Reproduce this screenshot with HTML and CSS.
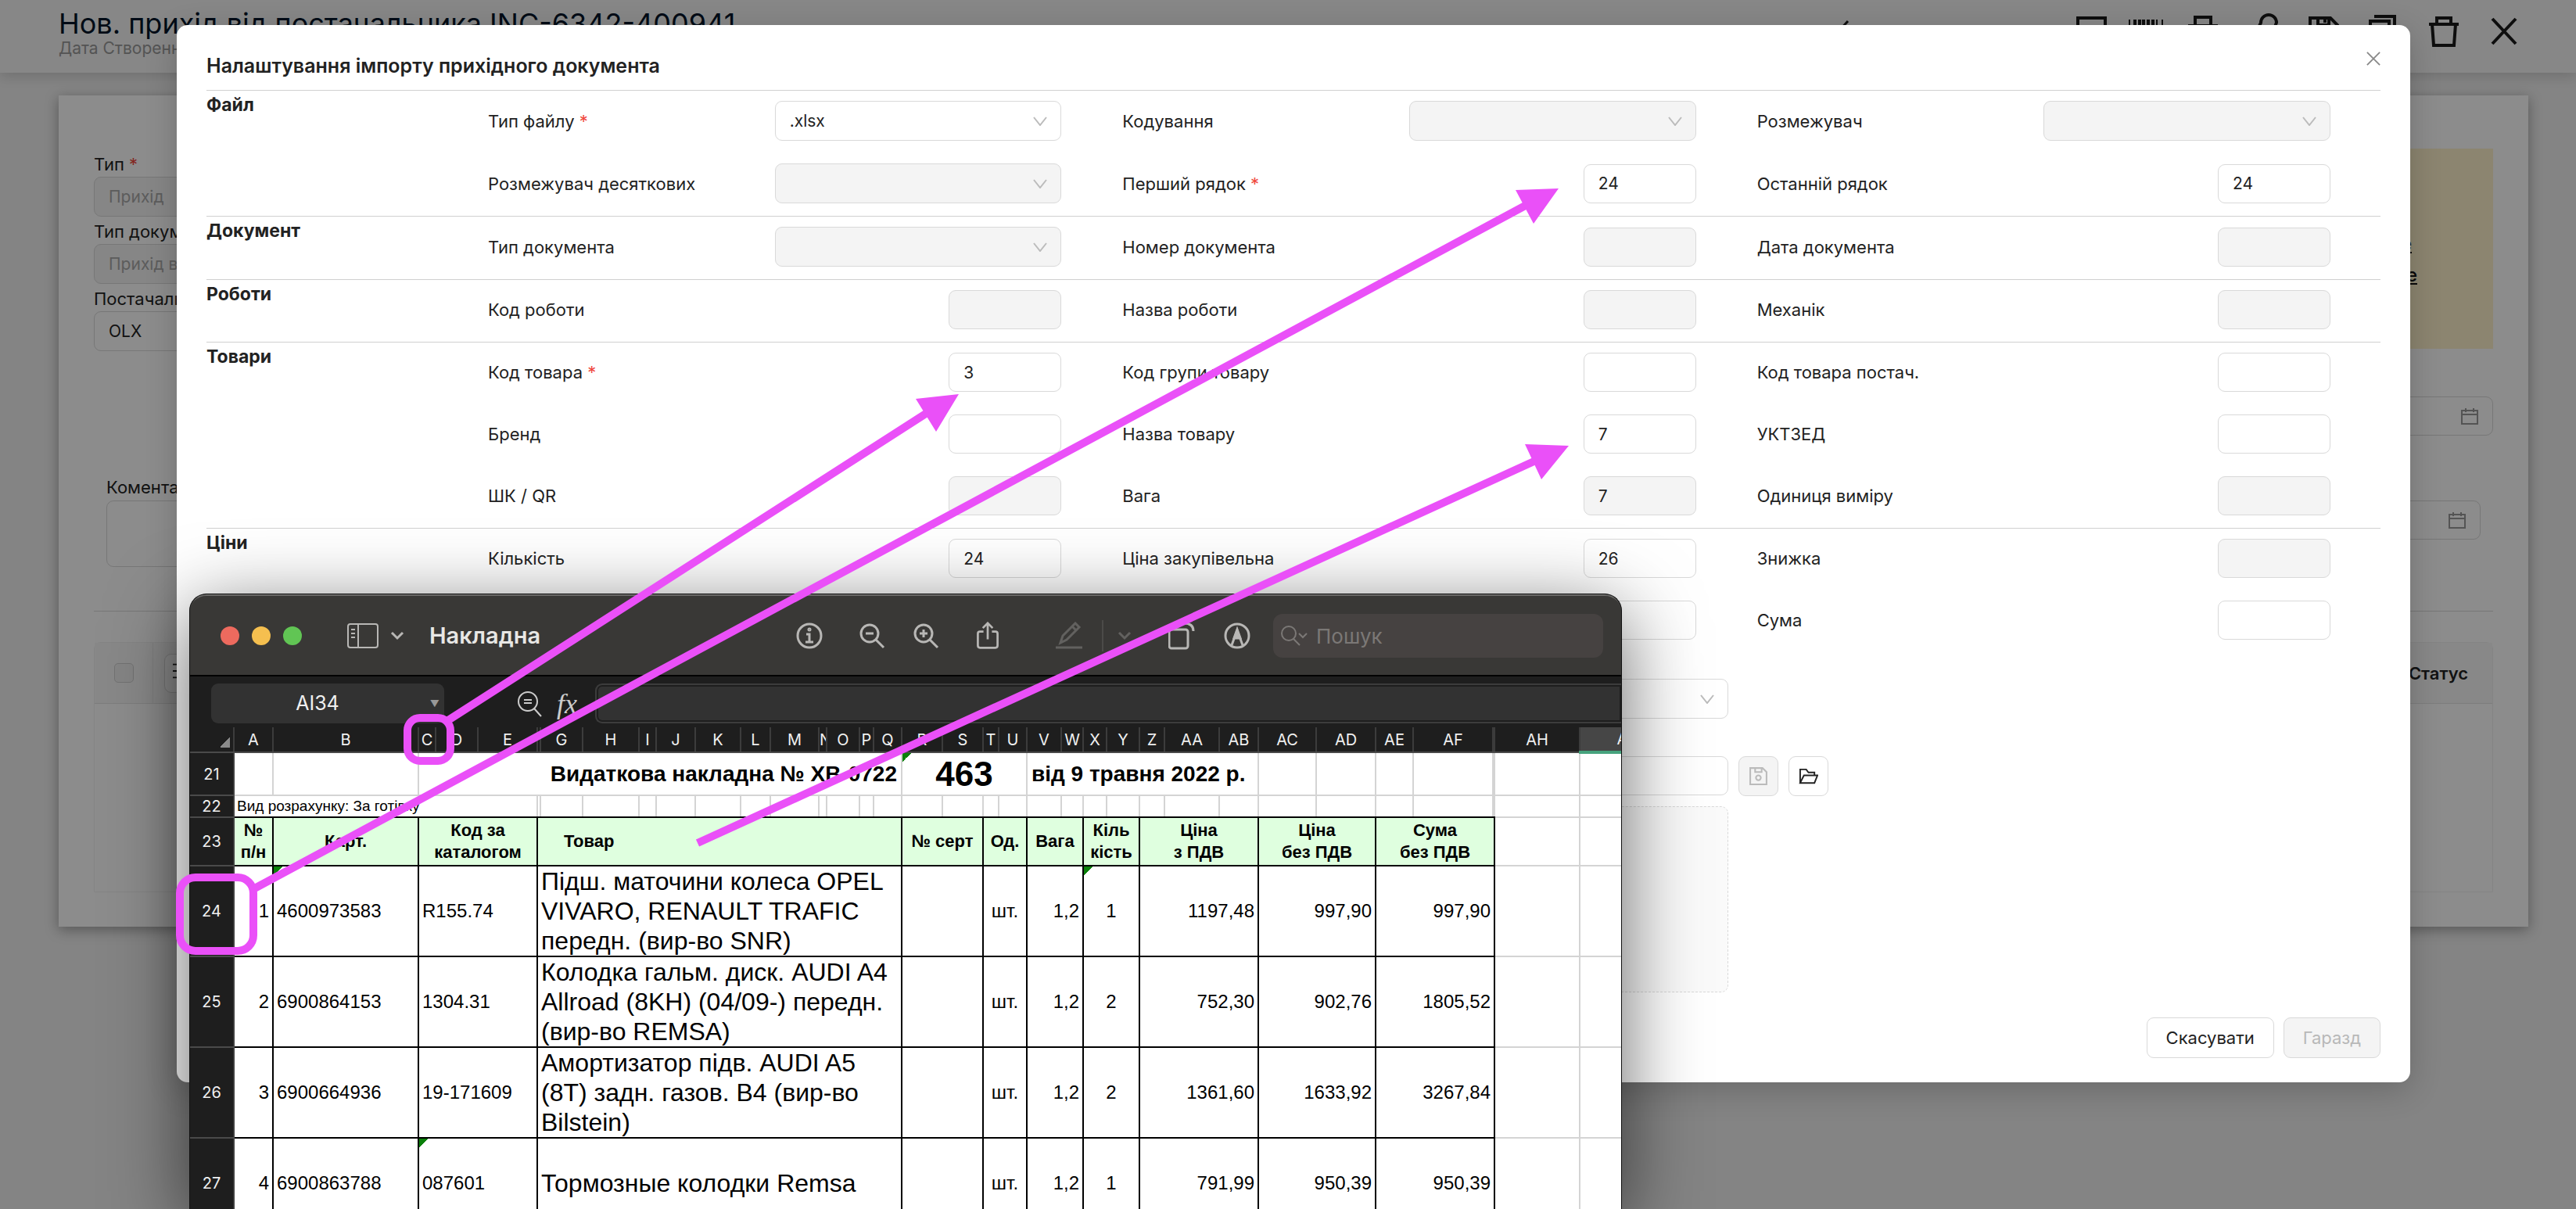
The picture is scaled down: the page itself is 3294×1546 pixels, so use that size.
FILE: index.html
```html
<!DOCTYPE html>
<html lang="uk">
<head>
<meta charset="utf-8">
<title>Налаштування імпорту прихідного документа</title>
<link rel="stylesheet" href="styles.css">
</head>
<body>
<svg class="sprite" aria-hidden="true">
  <symbol id="chev" viewBox="0 0 18 12"><path d="M1 1l8 10 8-10" fill="none" stroke="currentColor" stroke-width="2"/></symbol>
  <symbol id="cal" viewBox="0 0 22 22"><path d="M1 4h20v17H1zM1 9h20M6 1v5M16 1v5" fill="none" stroke="currentColor" stroke-width="2"/></symbol>
  <symbol id="x" viewBox="0 0 20 20"><path d="M1 1l18 18M19 1L1 19" fill="none" stroke="currentColor" stroke-width="2"/></symbol>
</svg>

<header class="topbar">
  <div>
    <h1 class="topbar-title">Нов. прихід від постачальника INC-6342-400941</h1>
    <p class="topbar-sub">Дата Створення</p>
  </div>
  <nav class="topbar-actions" aria-label="Дії">
    <button type="button" class="tool tool-far" aria-label="Назад"><svg viewBox="0 0 40 40"><path d="M30 7L18 20l12 13" fill="none" stroke="currentColor" stroke-width="3"/></svg></button>
    <button type="button" class="tool tool-tight" aria-label="Повідомлення"><svg viewBox="0 0 40 40"><path d="M2 30V3h35v27H2z" fill="none" stroke="currentColor" stroke-width="4"/></svg></button>
    <button type="button" class="tool tool-tight" aria-label="Штрихкод"><svg viewBox="0 0 40 40"><path d="M-1 5v30M34 5v30M41 5v30" stroke="currentColor" stroke-width="2"/><path d="M6 5v30M12 5v30M17 5v30M23 5v30M29 5v30" stroke="currentColor" stroke-width="4"/></svg></button>
    <button type="button" class="tool" aria-label="Друк"><svg viewBox="0 0 40 40"><path d="M10 13V2h20v11M3 30V13h34v17M10 22h20v15H10z" fill="none" stroke="currentColor" stroke-width="4"/></svg></button>
    <button type="button" class="tool" aria-label="Вкладення"><svg viewBox="0 0 40 40"><path d="M12 30l-2-8 7-15a10 10 0 0 1 20 0L27 33" transform="translate(0 2)" fill="none" stroke="currentColor" stroke-width="4"/></svg></button>
    <button type="button" class="tool" aria-label="Зберегти"><svg viewBox="0 0 40 40"><path d="M3 3h26l9 9v25H3zM13 3v9h14V3M22 3v6" fill="none" stroke="currentColor" stroke-width="4"/></svg></button>
    <button type="button" class="tool" aria-label="Копіювати"><svg viewBox="0 0 40 40"><path d="M8 1h26v28M3 7h24v30H3z" fill="none" stroke="currentColor" stroke-width="4"/></svg></button>
    <button type="button" class="tool" aria-label="Видалити"><svg viewBox="0 0 40 40"><path d="M1 11h38M5 11l2 27h26l2-27M11 10V3h18v7" fill="none" stroke="currentColor" stroke-width="4"/></svg></button>
    <button type="button" class="tool" aria-label="Закрити"><svg viewBox="0 0 40 40"><path d="M5 4l30 32M35 4L5 36" fill="none" stroke="currentColor" stroke-width="4"/></svg></button>
  </nav>
</header>

<main class="card">
  <div class="card-top">
    <div class="card-fields">
      <label for="p-type">Тип <span class="req">*</span></label>
      <select id="p-type" class="box" disabled><option>Прихід</option></select>
      <label for="p-doc">Тип документа</label>
      <select id="p-doc" class="box" disabled><option>Прихід від постачальника</option></select>
      <label for="p-sup">Постачальник</label>
      <select id="p-sup" class="box"><option>OLX</option></select>
    </div>
    <div class="card-side">
      <div class="notice"><a href="#">le</a><a href="#">ore</a></div>
      <div class="date box"><svg><use href="#cal"/></svg></div>
    </div>
  </div>
  <div class="card-comment">
    <div class="comment">
      <label for="p-com">Коментар</label>
      <textarea id="p-com" class="box"></textarea>
    </div>
    <div class="date box"><svg><use href="#cal"/></svg></div>
  </div>
  <hr class="card-line">
  <div class="lines">
    <div class="lines-head">
      <span class="lines-check"><input type="checkbox" aria-label="Вибрати всі"></span>
      <button type="button" class="box menu-btn" aria-label="Меню"><svg viewBox="0 0 30 30"><path d="M0 6h26M0 15h26M0 24h26" stroke="currentColor" stroke-width="2"/></svg></button>
      <strong class="lines-status">Статус</strong>
    </div>
  </div>
</main>

<div class="mask">
  <section class="modal" role="dialog" aria-labelledby="m-title">
    <header class="modal-head">
      <h2 id="m-title">Налаштування імпорту прихідного документа</h2>
      <button type="button" class="close" aria-label="Закрити вікно"><svg><use href="#x"/></svg></button>
    </header>

    <section class="group">
      <h3>Файл</h3>
      <div class="fields">
        <div class="field"><label for="f1">Тип файлу <span class="req">*</span></label><span class="select"><select id="f1" class="box"><option>.xlsx</option></select><svg><use href="#chev"/></svg></span></div>
        <div class="field"><label for="f2">Кодування</label><span class="select"><select id="f2" class="box" disabled></select><svg><use href="#chev"/></svg></span></div>
        <div class="field"><label for="f3">Розмежувач</label><span class="select"><select id="f3" class="box" disabled></select><svg><use href="#chev"/></svg></span></div>
        <div class="field"><label for="f4">Розмежувач десяткових</label><span class="select"><select id="f4" class="box" disabled></select><svg><use href="#chev"/></svg></span></div>
        <div class="field"><label for="f5">Перший рядок <span class="req">*</span></label><input id="f5" class="box num" value="24"></div>
        <div class="field"><label for="f6">Останній рядок</label><input id="f6" class="box num" value="24"></div>
      </div>
    </section>
    <section class="group">
      <h3>Документ</h3>
      <div class="fields">
        <div class="field"><label for="d1">Тип документа</label><span class="select"><select id="d1" class="box" disabled></select><svg><use href="#chev"/></svg></span></div>
        <div class="field"><label for="d2">Номер документа</label><input id="d2" class="box num" disabled></div>
        <div class="field"><label for="d3">Дата документа</label><input id="d3" class="box num" disabled></div>
      </div>
    </section>
    <section class="group">
      <h3>Роботи</h3>
      <div class="fields">
        <div class="field"><label for="r1">Код роботи</label><input id="r1" class="box num" disabled></div>
        <div class="field"><label for="r2">Назва роботи</label><input id="r2" class="box num" disabled></div>
        <div class="field"><label for="r3">Механік</label><input id="r3" class="box num" disabled></div>
      </div>
    </section>
    <section class="group">
      <h3>Товари</h3>
      <div class="fields">
        <div class="field"><label for="t1">Код товара <span class="req">*</span></label><input id="t1" class="box num" value="3"></div>
        <div class="field"><label for="t2">Код групи товару</label><input id="t2" class="box num"></div>
        <div class="field"><label for="t3">Код товара постач.</label><input id="t3" class="box num"></div>
        <div class="field"><label for="t4">Бренд</label><input id="t4" class="box num"></div>
        <div class="field"><label for="t5">Назва товару</label><input id="t5" class="box num" value="7"></div>
        <div class="field"><label for="t6">УКТЗЕД</label><input id="t6" class="box num"></div>
        <div class="field"><label for="t7">ШК / QR</label><input id="t7" class="box num" disabled></div>
        <div class="field"><label for="t8">Вага</label><input id="t8" class="box num" value="7" disabled></div>
        <div class="field"><label for="t9">Одиниця виміру</label><input id="t9" class="box num" disabled></div>
      </div>
    </section>
    <section class="group">
      <h3>Ціни</h3>
      <div class="fields">
        <div class="field"><label for="c1">Кількість</label><input id="c1" class="box num" value="24"></div>
        <div class="field"><label for="c2">Ціна закупівельна</label><input id="c2" class="box num" value="26"></div>
        <div class="field"><label for="c3">Знижка</label><input id="c3" class="box num" disabled></div>
        <div class="field mid"><input class="box num" aria-label="Ціна продажна"></div>
        <div class="field"><label for="c5">Сума</label><input id="c5" class="box num"></div>
      </div>
    </section>

    <div class="preset">
      <span class="select wide"><select class="box" aria-label="Шаблон"></select><svg><use href="#chev"/></svg></span>
      <div class="preset-name">
        <input class="box wide" aria-label="Назва шаблону">
        <button type="button" class="icon-btn" disabled aria-label="Зберегти шаблон"><svg viewBox="0 0 24 24"><path d="M2 2h15l5 5v15H2zM8 2v5h8V2" fill="none" stroke="currentColor" stroke-width="2"/><circle cx="12" cy="14" r="3" fill="none" stroke="currentColor" stroke-width="2"/></svg></button>
        <button type="button" class="icon-btn" aria-label="Відкрити шаблон"><svg viewBox="0 0 26 24"><path d="M2 21V3h8l3 4h8v4M2 21l5-10h18l-4 10z" fill="none" stroke="currentColor" stroke-width="2"/></svg></button>
      </div>
      <div class="drop"></div>
    </div>
    <footer class="modal-foot">
      <button type="button" class="btn">Скасувати</button>
      <button type="button" class="btn" disabled>Гаразд</button>
    </footer>
  </section>
</div>

<section class="preview" aria-label="Накладна">
  <header class="pv-bar">
    <span class="lights"><i class="red"></i><i class="yellow"></i><i class="green"></i></span>
    <button type="button" class="pv-side" aria-label="Бічна панель"><svg viewBox="0 0 40 32"><path d="M4 1h32a3 3 0 0 1 3 3v24a3 3 0 0 1-3 3H4a3 3 0 0 1-3-3V4a3 3 0 0 1 3-3zM14 1v30M5 8h5M5 13h5M5 18h5" fill="none" stroke="currentColor" stroke-width="2"/></svg><svg class="tiny" viewBox="0 0 18 12"><path d="M2 2l7 7 7-7" fill="none" stroke="currentColor" stroke-width="3"/></svg></button>
    <h2 class="pv-title">Накладна</h2>
    <div class="pv-tools">
      <svg viewBox="0 0 34 34"><circle cx="17" cy="17" r="15"/><path d="M13 15h4v9M12 25h10"/><circle cx="17" cy="9" r="1"/></svg>
      <svg viewBox="0 0 34 34"><circle cx="14" cy="14" r="11"/><path d="M22 22l10 10M9 14h10"/></svg>
      <svg viewBox="0 0 34 34"><circle cx="14" cy="14" r="11"/><path d="M22 22l10 10M9 14h10M14 9v10"/></svg>
      <svg viewBox="0 0 34 40"><path d="M11 14H6a3 3 0 0 0-3 3v17a3 3 0 0 0 3 3h22a3 3 0 0 0 3-3V17a3 3 0 0 0-3-3h-5M17 25V3M10 9l7-7 7 7"/></svg>
      <svg class="off" viewBox="0 0 34 34"><path d="M0 32h34M6 26l3-9L25 1l5 5-16 16zM21 5l5 5"/></svg>
      <i class="sep"></i>
      <svg class="off tiny" viewBox="0 0 18 12"><path d="M2 2l7 7 7-7"/></svg>
      <svg viewBox="0 0 34 34"><path d="M1 12a3 3 0 0 1 3-3h18a3 3 0 0 1 3 3v18a3 3 0 0 1-3 3H4a3 3 0 0 1-3-3zM20 1c7 0 12 3 12 10"/></svg>
      <svg viewBox="0 0 34 34"><circle cx="17" cy="17" r="15"/><path d="M10 29l7-19 7 19"/><path class="solid" d="M17 9l-4 11h8z"/></svg>
      <label class="search"><svg viewBox="0 0 36 28"><circle cx="11" cy="11" r="9"/><path d="M17 18l8 8M24 11l5 5 5-5"/></svg><input placeholder="Пошук" aria-label="Пошук"></label>
    </div>
  </header>
  <div class="fx-bar">
    <div class="name-box">AI34<span>▼</span></div>
    <svg viewBox="0 0 32 34"><circle cx="14" cy="14" r="12"/><path d="M22 23l9 10M9 12h10M9 16h10"/></svg>
    <span class="fx">fx</span>
    <div class="fx-input"></div>
  </div>
  <table class="sheet">
    <colgroup><col class="w56"><col class="w50"><col class="w186"><col class="w22"><col class="w54"><col class="w76"><col class="w4"><col class="w54"><col class="w72"><col class="w22"><col class="w50"><col class="w58"><col class="w38"><col class="w62"><col class="w10"><col class="w42"><col class="w18"><col class="w36"><col class="w52"><col class="w52"><col class="w20"><col class="w36"><col class="w44"><col class="w28"><col class="w30"><col class="w42"><col class="w32"><col class="w70"><col class="w50"><col class="w74"><col class="w76"><col class="w48"><col class="w102"><col class="w2"><col class="w109"><col class="w114"></colgroup>
    <thead><tr><th class="corner"></th><th>A</th><th>B</th><th>C</th><th>D</th><th>E</th><th></th><th>G</th><th>H</th><th>I</th><th>J</th><th>K</th><th>L</th><th>M</th><th>N</th><th>O</th><th>P</th><th>Q</th><th>R</th><th>S</th><th>T</th><th>U</th><th>V</th><th>W</th><th>X</th><th>Y</th><th>Z</th><th>AA</th><th>AB</th><th>AC</th><th>AD</th><th>AE</th><th>AF</th><th></th><th>AH</th><th class="sel">AI</th></tr></thead>
    <tbody>
      <tr class="r21"><th>21</th><td></td><td></td><td colspan="15" class="doc right">Видаткова накладна № ХВ-0722</td><td colspan="4" class="docnum flag">463</td><td colspan="7" class="doc">від 9 травня 2022 р.</td><td></td><td></td><td></td><td></td><td></td><td></td><td></td></tr>
      <tr class="r22"><th>22</th><td colspan="5" class="pay">Вид розрахунку: За готівку</td><td></td><td></td><td></td><td></td><td></td><td></td><td></td><td></td><td></td><td></td><td></td><td></td><td></td><td></td><td></td><td></td><td></td><td></td><td></td><td></td><td></td><td></td><td></td><td></td><td></td><td></td><td></td><td></td><td class="out"></td><td class="out"></td></tr>
      <tr class="r23"><th>23</th><td>№<br>п/н</td><td>Карт.</td><td colspan="3">Код за<br>каталогом</td><td colspan="12" class="goods-head">Товар</td><td colspan="2">№ серт</td><td colspan="2">Од.</td><td colspan="2">Вага</td><td colspan="2">Кіль<br>кість</td><td colspan="3">Ціна<br>з ПДВ</td><td colspan="2">Ціна<br>без ПДВ</td><td colspan="3">Сума<br>без ПДВ</td><td class="out"></td><td class="out"></td></tr>
      <tr class="item"><th>24</th><td class="right">1</td><td class="flag">4600973583</td><td colspan="3">R155.74</td><td colspan="12" class="goods">Підш. маточини колеса OPEL VIVARO, RENAULT TRAFIC передн. (вир-во SNR)</td><td colspan="2"></td><td colspan="2" class="mid">шт.</td><td colspan="2" class="right">1,2</td><td colspan="2" class="mid flag">1</td><td colspan="3" class="right">1197,48</td><td colspan="2" class="right">997,90</td><td colspan="3" class="right">997,90</td><td class="out"></td><td class="out"></td></tr>
      <tr class="item"><th>25</th><td class="right">2</td><td>6900864153</td><td colspan="3">1304.31</td><td colspan="12" class="goods">Колодка гальм. диск. AUDI A4 Allroad (8KH) (04/09-) передн. (вир-во REMSA)</td><td colspan="2"></td><td colspan="2" class="mid">шт.</td><td colspan="2" class="right">1,2</td><td colspan="2" class="mid">2</td><td colspan="3" class="right">752,30</td><td colspan="2" class="right">902,76</td><td colspan="3" class="right">1805,52</td><td class="out"></td><td class="out"></td></tr>
      <tr class="item"><th>26</th><td class="right">3</td><td>6900664936</td><td colspan="3">19-171609</td><td colspan="12" class="goods">Амортизатор підв. AUDI A5<br>(8T) задн. газов. B4 (вир-во Bilstein)</td><td colspan="2"></td><td colspan="2" class="mid">шт.</td><td colspan="2" class="right">1,2</td><td colspan="2" class="mid">2</td><td colspan="3" class="right">1361,60</td><td colspan="2" class="right">1633,92</td><td colspan="3" class="right">3267,84</td><td class="out"></td><td class="out"></td></tr>
      <tr class="item"><th>27</th><td class="right">4</td><td>6900863788</td><td colspan="3" class="flag">087601</td><td colspan="12" class="goods">Тормозные колодки Remsa</td><td colspan="2"></td><td colspan="2" class="mid">шт.</td><td colspan="2" class="right">1,2</td><td colspan="2" class="mid">1</td><td colspan="3" class="right">791,99</td><td colspan="2" class="right">950,39</td><td colspan="3" class="right">950,39</td><td class="out"></td><td class="out"></td></tr>
    </tbody>
  </table>
</section>

<svg class="marks" aria-hidden="true">
  <g fill="none" stroke="#ea50f8" stroke-width="10">
    <rect x="521" y="918" width="55" height="55" rx="16"/>
    <rect x="230" y="1122" width="94" height="94" rx="20"/>
    <path d="M570 923L1190 525M320 1139L1954 261M892 1078L1968 587"/>
  </g>
  <path fill="#ea50f8" d="M1226 504l-55 6 26 42zM1993 241l-55 2 23 43zM2006 570l-56-2 21 45z"/>
</svg>
</body>
</html>
```
FILE: styles.css
```css
* { box-sizing: border-box; }
html, body { height: 100%; margin: 0; }
body {
  position: relative;
  overflow: hidden;
  background: #f0f0f0;
  color: #222;
  font: 22px/26px Inter, "Noto Sans", sans-serif;
}
h1, h2, h3, p { margin: 0; }
button, input, select, textarea { font: inherit; color: inherit; }
.sprite { position: absolute; width: 0; height: 0; }

.box {
  height: 50px;
  padding: 0 18px;
  background: #fff;
  border: 1px solid #d9d9d9;
  border-radius: 9px;
  appearance: none;
  opacity: 1;
  font-size: 21px;
}
.box:disabled { background: #f4f4f4; }
select.box { height: 51px; }
.req { color: #f0483e; }

/* page behind the dialog */
.topbar {
  display: flex;
  justify-content: space-between;
  height: 93px;
  padding: 9px 72px 0 75px;
  background: #f6f6f6;
  box-shadow: 0 4px 16px rgba(0, 0, 0, .16);
}
.topbar-title { font-size: 36px; line-height: 42px; font-weight: 400; color: #001529; }
.topbar-sub { font-size: 21px; line-height: 22px; color: #999; }
.topbar-actions { display: flex; gap: 37px; padding-top: 11px; }
.tool { width: 40px; height: 40px; padding: 0; border: 0; background: none; color: #1a1a1a; }
.tool svg { width: 40px; height: 40px; overflow: visible; }
.tool-tight { margin: 0 -4px; }
.tool-far { margin-right: 249px; }

.card {
  height: 1063px;
  margin: 29px 61px 0 75px;
  padding: 68px 45px 44px;
  background: #fff;
  box-shadow: 0 4px 16px rgba(0, 0, 0, .35);
}
.card-top { display: flex; justify-content: space-between; height: 408px; }
.card-fields { display: flex; flex-direction: column; width: 600px; padding-top: 4px; }
.card-fields label { line-height: 32px; }
.card-fields .box { margin-bottom: 3px; }
.card-fields .box:disabled { color: #a8a8a8; }
.card-side { width: 400px; }
.notice {
  display: flex;
  flex-direction: column;
  align-items: flex-end;
  height: 256px;
  margin-bottom: 61px;
  padding: 102px 97px 0 0;
  background: #fff2cc;
}
.notice a { color: #111; font-size: 24px; line-height: 40px; font-weight: 500; }
.notice a:first-child { padding-right: 7px; }
.date { display: flex; align-items: center; justify-content: flex-end; color: #999; }
.date svg { width: 22px; height: 22px; }
.card-comment { display: flex; justify-content: space-between; align-items: flex-end; padding: 0 16px; }
.comment { display: flex; flex-direction: column; width: 800px; padding-top: 8px; }
.comment label { line-height: 34px; }
.comment textarea { height: 85px; resize: none; }
.card-comment .date { width: 400px; margin-bottom: 35px; }
.card-line { height: 1px; margin: 56px 0 39px; border: 0; background: #d9d9d9; }
.lines { height: 320px; border: 1px solid #f0f0f0; border-radius: 9px 9px 0 0; }
.lines-head {
  display: flex;
  align-items: center;
  height: 78px;
  padding-right: 31px;
  background: #f7f7f7;
  border-bottom: 1px solid #e4e4e4;
}
.lines-check { display: flex; align-items: center; width: 75px; height: 100%; padding-left: 25px; border-right: 1px solid #e8e8e8; }
.lines-check input { width: 25px; height: 25px; margin: 0; appearance: none; border: 1px solid #d0d0d0; border-radius: 5px; background: #f1f1f1; }
.menu-btn { width: 50px; margin-left: 14px; padding: 0 10px; }
.lines-status { margin-left: auto; font-weight: 600; }

/* dialog */
.mask { position: absolute; inset: 0; padding: 32px 212px 0 226px; background: rgba(0, 0, 0, .45); }
.modal { padding: 0 38px 31px; background: #fff; border-radius: 14px; box-shadow: 0 10px 40px rgba(0, 0, 0, .2); }
.modal-head { display: flex; justify-content: space-between; height: 83px; padding-top: 38px; }
.modal-head h2 { font-size: 25px; line-height: 28px; font-weight: 600; }
.close { align-self: flex-start; margin-top: -4px; padding: 0; border: 0; background: none; color: #888; }
.close svg { display: block; width: 18px; height: 18px; }
.group {
  display: grid;
  grid-template-columns: 360px 1fr;
  padding: 13px 64px 16px 0;
  border-top: 1px solid #d0d0d0;
}
.group h3 { margin-top: -8px; font-size: 23px; line-height: 26px; font-weight: 700; }
.fields { display: grid; grid-template-columns: repeat(3, 1fr); gap: 29px 78px; }
.field { display: flex; align-items: center; justify-content: space-between; }
.field.mid { grid-column: 2; justify-content: flex-end; }
.num { width: 144px; }
.select { position: relative; display: block; width: 50%; color: #bbb; }
.select select { display: block; width: 100%; color: #222; }
.select svg { position: absolute; right: 18px; top: 20px; width: 18px; height: 12px; }
.preset { display: flex; flex-direction: column; width: 70%; padding-left: 360px; margin-top: 34px; }
.preset .wide { width: 100%; flex: none; }
.preset-name { display: flex; gap: 13px; margin: 48px 0 13px; }
.icon-btn {
  flex: none;
  width: 51px;
  height: 51px;
  padding: 12px;
  background: #fff;
  border: 1px solid #d9d9d9;
  border-radius: 9px;
}
.icon-btn:disabled { background: #f4f4f4; color: #bbb; }
.icon-btn svg { display: block; width: 100%; }
.drop { height: 238px; background: #fafafa; border: 1px dashed #d9d9d9; border-radius: 9px; }
.modal-foot { display: flex; justify-content: flex-end; gap: 12px; margin-top: 32px; }
.modal-foot .btn { height: 52px; padding: 0 24px; background: #fff; border: 1px solid #d9d9d9; border-radius: 9px; }
.modal-foot .btn:disabled { background: #f4f4f4; color: #b8b8b8; }

/* spreadsheet preview window */
.preview {
  position: absolute;
  left: 242px;
  top: 759px;
  width: 1832px;
  bottom: 0;
  overflow: hidden;
  border: 1px solid #111;
  border-bottom: 0;
  border-radius: 22px 22px 0 0;
  background: #1e1e1e;
  color: #e6e6e6;
  box-shadow: 0 24px 100px rgba(0, 0, 0, .6);
}
.preview svg { fill: none; stroke: currentColor; stroke-width: 2; }
.preview .solid { fill: currentColor; }
.pv-bar {
  display: flex;
  align-items: center;
  height: 105px;
  padding: 0 23px 0 39px;
  background: #393836;
  border-top: 2px solid #6a6967;
  border-bottom: 2px solid #000;
  border-radius: 21px 21px 0 0;
  color: #b8b7b5;
}
.lights { display: flex; gap: 16px; }
.lights i { width: 24px; height: 24px; border-radius: 50%; }
.red { background: #ed6a5e; }
.yellow { background: #f5bf4f; }
.green { background: #61c554; }
.pv-side { display: flex; align-items: center; gap: 15px; margin: 0 32px 0 58px; padding: 0; border: 0; background: none; }
.pv-side svg { width: 40px; height: 32px; }
.preview .tiny { width: 18px; height: 12px; }
.pv-title { font-size: 29px; line-height: 36px; font-weight: 600; color: #e8e7e5; }
.pv-tools {
  display: grid;
  grid-template-columns: 80px 69px 79px 104px 59px 20px 65px 71px 63px 422px;
  align-items: center;
  margin-left: auto;
}
.pv-tools > svg { width: 34px; height: 36px; stroke-width: 3; }
.pv-tools > .off { color: #62615f; }
.sep { width: 2px; height: 40px; background: #4c4b49; }
.search { display: flex; align-items: center; gap: 10px; height: 56px; padding: 0 9px; background: #464241; border-radius: 12px; color: #7b7876; }
.search svg { width: 36px; height: 28px; }
.search input { flex: 1; min-width: 0; padding: 2px 0 0; border: 0; outline: 0; background: none; font-size: 26px; }
.search input::placeholder { color: #7b7876; opacity: 1; }
.fx-bar {
  display: grid;
  grid-template-columns: 391px 51px 49px 1fr;
  align-items: center;
  height: 65px;
  padding: 9px 0 5px 27px;
  color: #ccc;
}
.fx-bar svg { width: 32px; height: 34px; }
.name-box {
  position: relative;
  width: 298px;
  height: 51px;
  padding-right: 26px;
  background: #323232;
  border-radius: 9px;
  font-size: 25px;
  line-height: 51px;
  text-align: center;
  color: #f0f0f0;
}
.name-box span { position: absolute; right: 6px; top: 0; font-size: 12px; color: #999; }
.fx { font: italic 36px/40px "Liberation Serif", serif; }
.fx-input { height: 51px; background: #323232; border: 2px solid #3c3c3c; border-right: 0; border-radius: 9px 0 0 9px; box-shadow: inset 0 0 0 2px #1e1e1e; }

.sheet {
  width: 1891px;
  table-layout: fixed;
  border-collapse: collapse;
  background: #fff;
  color: #000;
  font: 24px/28px "Liberation Sans", sans-serif;
}
.sheet th, .sheet td { padding: 0; overflow: hidden; }
.sheet th {
  background: #1e1e1e;
  border-right: 2px solid #3c3c3c;
  border-bottom: 2px solid #4a4a4a;
  color: #f0f0f0;
  font: 20px/28px Inter, sans-serif;
  white-space: nowrap;
}
.sheet thead tr { height: 32px; }
.sheet .corner { background: linear-gradient(135deg, transparent 50%, #8a8a8a 50%) no-repeat 39px 12px / 12px 14px #1e1e1e; }
.sheet .sel { background: #464646; border-bottom: 4px solid #46a37d; }
.sheet td { padding: 0 4px; border-right: 2px solid #d4d4d4; border-bottom: 2px solid #d4d4d4; }
.sheet .right { text-align: right; }
.sheet .mid { text-align: center; }
.r21 { height: 55px; }
.r22 { height: 28px; }
.r23 { height: 62px; }
.item { height: 116px; }
.sheet .r21 td, .sheet .r22 td { padding: 0; white-space: nowrap; }
.sheet .r22 td, .sheet .r22 th { line-height: 24px; }
.sheet .r21 .doc { padding: 0 5px; font-size: 28px; font-weight: 700; }
.sheet .r21 .docnum { font-size: 44px; line-height: 48px; font-weight: 700; text-align: center; }
.sheet .r22 .pay { padding-left: 3px; font-size: 19px; }
.sheet .r22 td, .sheet .r23 td, .item td { border-color: #000; }
.sheet .r22 td { border-right-color: #d4d4d4; }
.sheet .r23 td { background: #dfffdf; font-size: 22px; font-weight: 700; text-align: center; }
.sheet .r23 td.goods-head { padding-left: 33px; text-align: left; }
.sheet .item td { border-color: #000; }
.sheet .goods { font-size: 32px; line-height: 38px; }
.sheet tr td.out { background: #fff; border-color: #d4d4d4; }
.sheet .flag { background: linear-gradient(135deg, #0a800a 50%, transparent 50%) no-repeat 0 0 / 11px 11px; }
.w2 { width: 2px; } .w4 { width: 4px; } .w10 { width: 10px; } .w18 { width: 18px; }
.w20 { width: 20px; } .w22 { width: 22px; } .w28 { width: 28px; } .w30 { width: 30px; }
.w32 { width: 32px; } .w36 { width: 36px; } .w38 { width: 38px; } .w42 { width: 42px; }
.w44 { width: 44px; } .w48 { width: 48px; } .w50 { width: 50px; } .w52 { width: 52px; }
.w54 { width: 54px; } .w56 { width: 56px; } .w58 { width: 58px; } .w62 { width: 62px; }
.w70 { width: 70px; } .w72 { width: 72px; } .w74 { width: 74px; } .w76 { width: 76px; }
.w102 { width: 102px; } .w109 { width: 109px; } .w114 { width: 114px; } .w186 { width: 186px; }

.marks { position: absolute; inset: 0; width: 100%; height: 100%; pointer-events: none; }
```
